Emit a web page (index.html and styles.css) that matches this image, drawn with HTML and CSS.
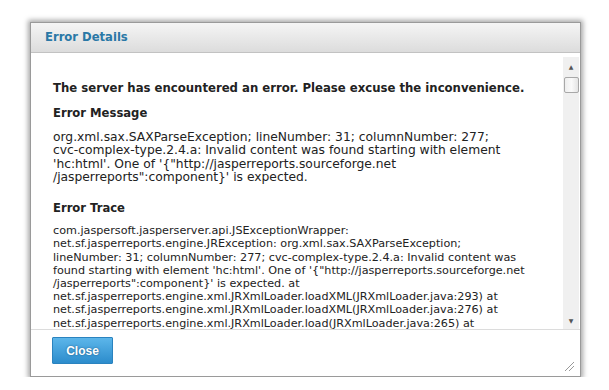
FILE: index.html
```html
<!DOCTYPE html>
<html>
<head>
    <title>Error Details</title>
    <link rel="stylesheet" href="styles.css">
</head>
<body>

<div class="dialog">
    <div class="dialog-header">Error Details</div>
    <div class="dialog-body">
        <div class="content">
            <p class="summary">The server has encountered an error. Please excuse the inconvenience.</p>
            <h3>Error Message</h3>
            <p class="message">org.xml.sax.SAXParseException; lineNumber: 31; columnNumber: 277;<br>
                cvc-complex-type.2.4.a: Invalid content was found starting with element<br>
                'hc:html'. One of '{"http://jasperreports.sourceforge.net<br>
                /jasperreports":component}' is expected.</p>
            <h3>Error Trace</h3>
            <p class="trace">com.jaspersoft.jasperserver.api.JSExceptionWrapper:<br>
                net.sf.jasperreports.engine.JRException: org.xml.sax.SAXParseException;<br>
                lineNumber: 31; columnNumber: 277; cvc-complex-type.2.4.a: Invalid content was<br>
                found starting with element 'hc:html'. One of '{"http://jasperreports.sourceforge.net<br>
                /jasperreports":component}' is expected. at<br>
                net.sf.jasperreports.engine.xml.JRXmlLoader.loadXML(JRXmlLoader.java:293) at<br>
                net.sf.jasperreports.engine.xml.JRXmlLoader.loadXML(JRXmlLoader.java:276) at<br>
                net.sf.jasperreports.engine.xml.JRXmlLoader.load(JRXmlLoader.java:265) at</p>
        </div>
        <div class="scrollbar">
            <span class="arrow up">&#9650;</span>
            <span class="thumb"></span>
            <span class="track"></span>
            <span class="arrow">&#9660;</span>
        </div>
    </div>
    <div class="dialog-footer">
        <button class="button">Close</button>
        <span class="grip"></span>
    </div>
</div>

</body>
</html>
```

FILE: styles.css
```css
body {
    margin: 0;
    background: #fff;
    font-family: "DejaVu Sans", Verdana, sans-serif;
    color: #222;
}

.dialog {
    width: 549px;
    margin: 22px 0 0 30px;
    border: 1px solid #9a9a9a;
    background: #fff;
    box-shadow: 0 0 5px 2px rgba(0, 0, 0, 0.35);
}

.dialog-header {
    height: 29px;
    line-height: 29px;
    padding-left: 14px;
    background: linear-gradient(#f5f5f5, #dcdcdc);
    border-bottom: 1px solid #c2c2c2;
    color: #2a78a6;
    font-size: 11.6px;
    font-weight: bold;
}

.dialog-body {
    display: flex;
    height: 276px;
    border-bottom: 1px solid #dcdcdc;
}

.content {
    flex: 1;
    overflow: hidden;
    white-space: nowrap;
    padding: 27px 0 0 22px;
}

.content p {
    margin: 0;
}

.summary {
    font-size: 11.7px;
    font-weight: bold;
    line-height: 16px;
}

.content h3 {
    margin: 9px 0 0;
    font-size: 11.6px;
    line-height: 16px;
}

.content .message {
    margin-top: 10px;
    font-size: 12.3px;
    line-height: 13.3px;
}

.message + h3 {
    margin-top: 16px;
}

.content .trace {
    margin-top: 8px;
    font-size: 11.2px;
    line-height: 13.2px;
}

.scrollbar {
    width: 16px;
    margin: 4px 1px 0 0;
    display: flex;
    flex-direction: column;
    align-items: center;
    background: #f0f0f0;
}

.arrow {
    height: 16px;
    line-height: 16px;
    font-size: 6px;
    color: #555;
}

.arrow.up {
    height: 20px;
    line-height: 20px;
}

.thumb {
    width: 13px;
    height: 14px;
    border: 1px solid #a8a8a8;
    border-radius: 2px;
    background: linear-gradient(90deg, #eee, #fafafa 50%, #e4e4e4);
}

.track {
    flex: 1;
}

.dialog-footer {
    position: relative;
    height: 46px;
    padding: 7px 0 0 21px;
    box-sizing: border-box;
}

.button {
    width: 61px;
    height: 27px;
    border: 1px solid #2a83bf;
    border-radius: 1px;
    background: linear-gradient(#5cb6ea, #2c8ccc);
    color: #fff;
    font-family: "Liberation Sans", Arial, sans-serif;
    font-size: 12px;
    font-weight: bold;
    text-shadow: 0 0 2px rgba(0, 40, 80, 0.6);
    cursor: pointer;
}

.grip {
    position: absolute;
    right: 6px;
    bottom: 5px;
    width: 9px;
    height: 9px;
    background: linear-gradient(135deg, transparent 45%, #999 45%, #999 52%, transparent 52%,
        transparent 68%, #999 68%, #999 75%, transparent 75%);
}
```
